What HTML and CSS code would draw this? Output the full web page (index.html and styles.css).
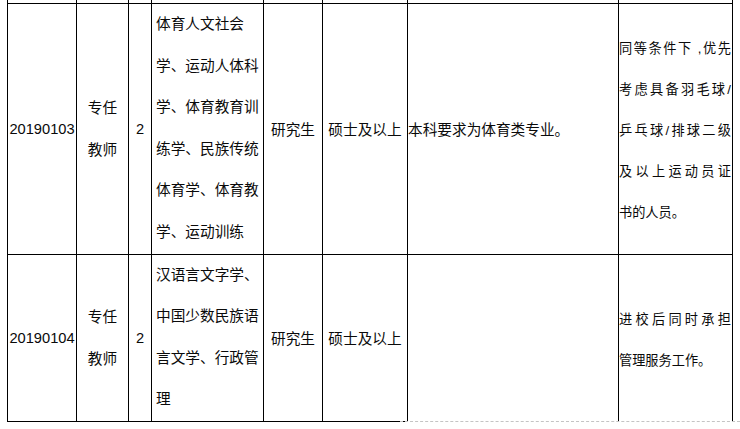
FILE: index.html
```html
<!DOCTYPE html>
<html lang="zh-CN">
<head>
<meta charset="utf-8">
<title>招聘岗位表</title>
<link rel="stylesheet" href="styles.css">
</head>
<body>
<div class="page">
  <table class="grid">
    <colgroup>
      <col class="c1"><col class="c2"><col class="c3"><col class="c4">
      <col class="c5"><col class="c6"><col class="c7"><col class="c8">
    </colgroup>
    <tr class="stub">
      <td></td><td></td><td></td><td></td><td></td><td></td><td></td><td></td>
    </tr>
    <tr class="r1">
      <td class="code">20190103</td>
      <td class="post">专任<br>教师</td>
      <td class="num">2</td>
      <td class="major">体育人文社会<br>学、运动人体科<br>学、体育教育训<br>练学、民族传统<br>体育学、体育教<br>学、运动训练</td>
      <td class="center">研究生</td>
      <td class="center">硕士及以上</td>
      <td class="req">本科要求为体育类专业。</td>
      <td class="note">
        <div class="note-body">
          <span class="jl">同等条件下 ,优先</span>
          <span class="jl">考虑具备羽毛球/</span>
          <span class="jl">乒乓球/排球二级</span>
          <span class="jl">及以上运动员证</span>
          <span class="ll">书的人员。</span>
        </div>
      </td>
    </tr>
    <tr class="r2">
      <td class="code">20190104</td>
      <td class="post">专任<br>教师</td>
      <td class="num">2</td>
      <td class="major">汉语言文字学、<br>中国少数民族语<br>言文学、行政管<br>理</td>
      <td class="center">研究生</td>
      <td class="center">硕士及以上</td>
      <td class="req open"></td>
      <td class="note open">
        <div class="note-body">
          <span class="jl">进校后同时承担</span>
          <span class="ll">管理服务工作。</span>
        </div>
      </td>
    </tr>
  </table>
  <div class="dash"></div>
</div>
</body>
</html>
```
FILE: styles.css
```css
html, body {
  margin: 0;
  padding: 0;
  background: #ffffff;
}
.page {
  width: 740px;
  height: 429px;
  overflow: hidden;
  font-family: "Liberation Sans", "Noto Sans CJK SC", sans-serif;
  font-size: 14.67px;
  color: #0a0a0a;
}
.grid {
  border-collapse: collapse;
  table-layout: fixed;
  width: 726px;
  margin-left: 7px;
  margin-top: -17px;
}
.c1 { width: 69px; }
.c2 { width: 52px; }
.c3 { width: 23px; }
.c4 { width: 112px; }
.c5 { width: 59px; }
.c6 { width: 85px; }
.c7 { width: 211px; }
.c8 { width: 114px; }
.grid td {
  border: 1px solid #000000;
  padding: 0;
  vertical-align: middle;
  white-space: nowrap;
  overflow: hidden;
}
.stub td { height: 19px; }
.r1 td { height: 249px; }
.r2 td { height: 165px; }
.code, .num, .center { text-align: center; }
.post {
  text-align: center;
  line-height: 42px;
}
.grid td.major {
  padding-left: 4px;
  line-height: 41.6px;
  text-align: left;
}
.req { text-align: left; }
.grid td.note {
  font-size: 13.2px;
  line-height: 41px;
  padding-right: 1px;
}
.note-body {
  padding-top: 3px;
}
.jl {
  display: block;
  text-align: justify;
  text-align-last: justify;
}
.ll {
  display: block;
  text-align: left;
}
.grid td.open { border-bottom: none; }
.dash {
  margin-left: 400px;
  width: 340px;
  margin-top: -1px;
  border-top: 1px dashed #c4c4c4;
}
```
